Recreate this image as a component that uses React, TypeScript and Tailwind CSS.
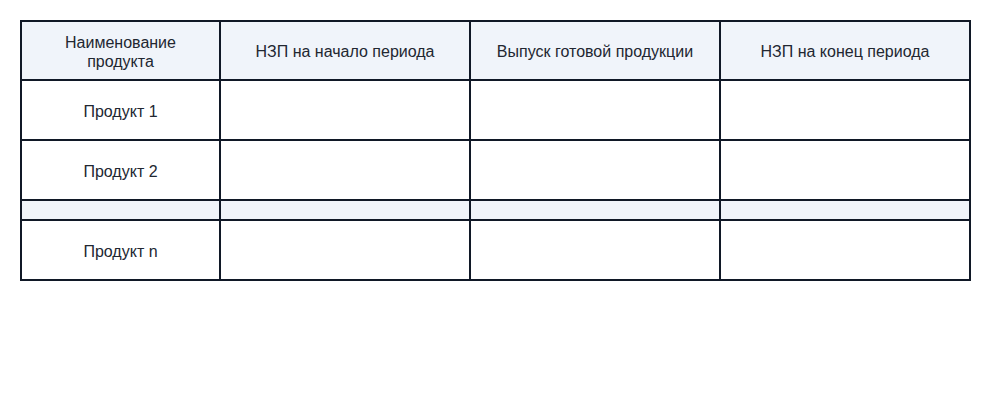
export default function App() {
	const cols = ["НЗП на начало периода", "Выпуск готовой продукции", "НЗП на конец периода"];
	const rows = ["Продукт 1", "Продукт 2", null, "Продукт n"];
	return (
		<div className="w-[1000px] h-[400px] bg-white pt-5 pl-5 font-['Liberation_Sans',Arial,sans-serif] text-[16px] text-[#222731]">
			<table className="border-collapse table-fixed w-[949px] border-2 border-[#101826]">
				<colgroup>
					<col className="w-[199px]" />
					<col className="w-[250px]" />
					<col className="w-[250px]" />
					<col className="w-[250px]" />
				</colgroup>
				<thead>
					<tr className="h-[59px] bg-[#f0f4fa]">
						<th className="border-2 border-[#101826] font-normal leading-[19px] px-2 pt-[3px]">
							Наименование
							<br />
							продукта
						</th>
						{cols.map((c) => (
							<th key={c} className="border-2 border-[#101826] font-normal px-2 pt-[3px]">
								{c}
							</th>
						))}
					</tr>
				</thead>
				<tbody>
					{rows.map((r, i) =>
						r ? (
							<tr key={i} className="h-[60px]">
								<td className="border-2 border-[#101826] text-center pt-[4px]">{r}</td>
								<td className="border-2 border-[#101826]"></td>
								<td className="border-2 border-[#101826]"></td>
								<td className="border-2 border-[#101826]"></td>
							</tr>
						) : (
							<tr key={i} className="h-[20px] bg-[#f0f4fa]">
								<td className="border-2 border-[#101826]"></td>
								<td className="border-2 border-[#101826]"></td>
								<td className="border-2 border-[#101826]"></td>
								<td className="border-2 border-[#101826]"></td>
							</tr>
						)
					)}
				</tbody>
			</table>
		</div>
	);
}
